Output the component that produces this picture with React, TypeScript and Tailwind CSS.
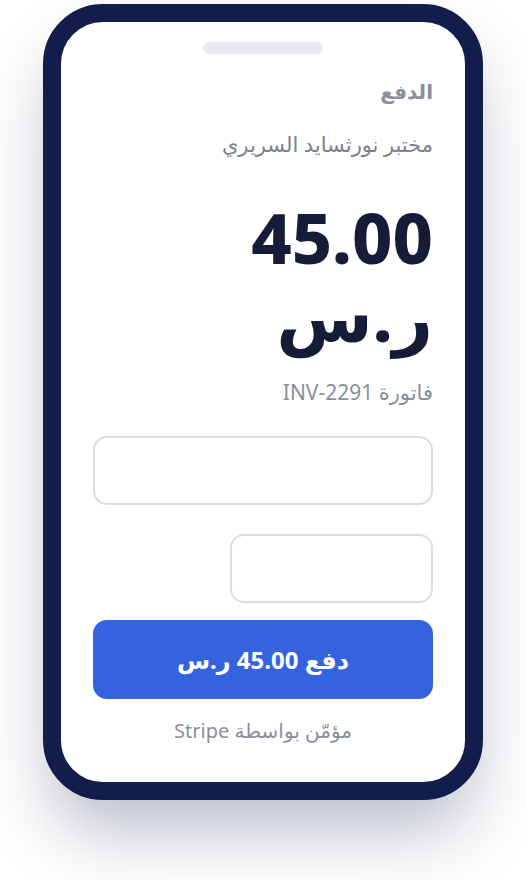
import React from 'react';

const font = { fontFamily: '"Noto Sans", "DejaVu Sans", sans-serif' };

export default function App() {
  return (
    <div className="min-h-[880px] w-full bg-white pt-[4px]" style={font}>
      <div
        dir="rtl"
        className="mx-auto flex h-[796px] w-[440px] flex-col rounded-[60px] border-[18px] border-[#131d4b] bg-white px-8 shadow-[0_40px_70px_-10px_rgba(20,30,75,0.3)]"
      >
        {/* notch */}
        <div className="mt-5 h-3 w-[120px] self-center rounded-full bg-[#e8eaee]" />

        <h1 className="mt-[24px] text-[20px] font-bold leading-7 text-[#8a8f9c]">الدفع</h1>
        <p className="mt-[24px] text-[21px] leading-7 text-[#7d8291]">مختبر نورثسايد السريري</p>

        <p className="mt-[40px] text-[70px] font-extrabold leading-[78px] text-[#161c38]">
          45.00
          <br />
          ر.س
        </p>

        <p className="mt-[24px] text-[21px] leading-7 text-[#8a8f9c]">فاتورة INV-2291</p>

        <div className="mt-[30px] h-[69px] w-full rounded-[14px] border-2 border-[#dcdde4] bg-white" />
        <div className="mt-[29px] h-[69px] w-[203px] rounded-[14px] border-2 border-[#dcdde4] bg-white" />

        <button className="mt-[17px] flex h-[79px] w-full items-center justify-center rounded-[14px] bg-[#3563e0] text-[24px] font-bold text-white">
          دفع 45.00 ر.س
        </button>

        <p className="mt-[18px] text-center text-[20px] leading-7 text-[#8a8f9c]">مؤمّن بواسطة Stripe</p>
      </div>
    </div>
  );
}
